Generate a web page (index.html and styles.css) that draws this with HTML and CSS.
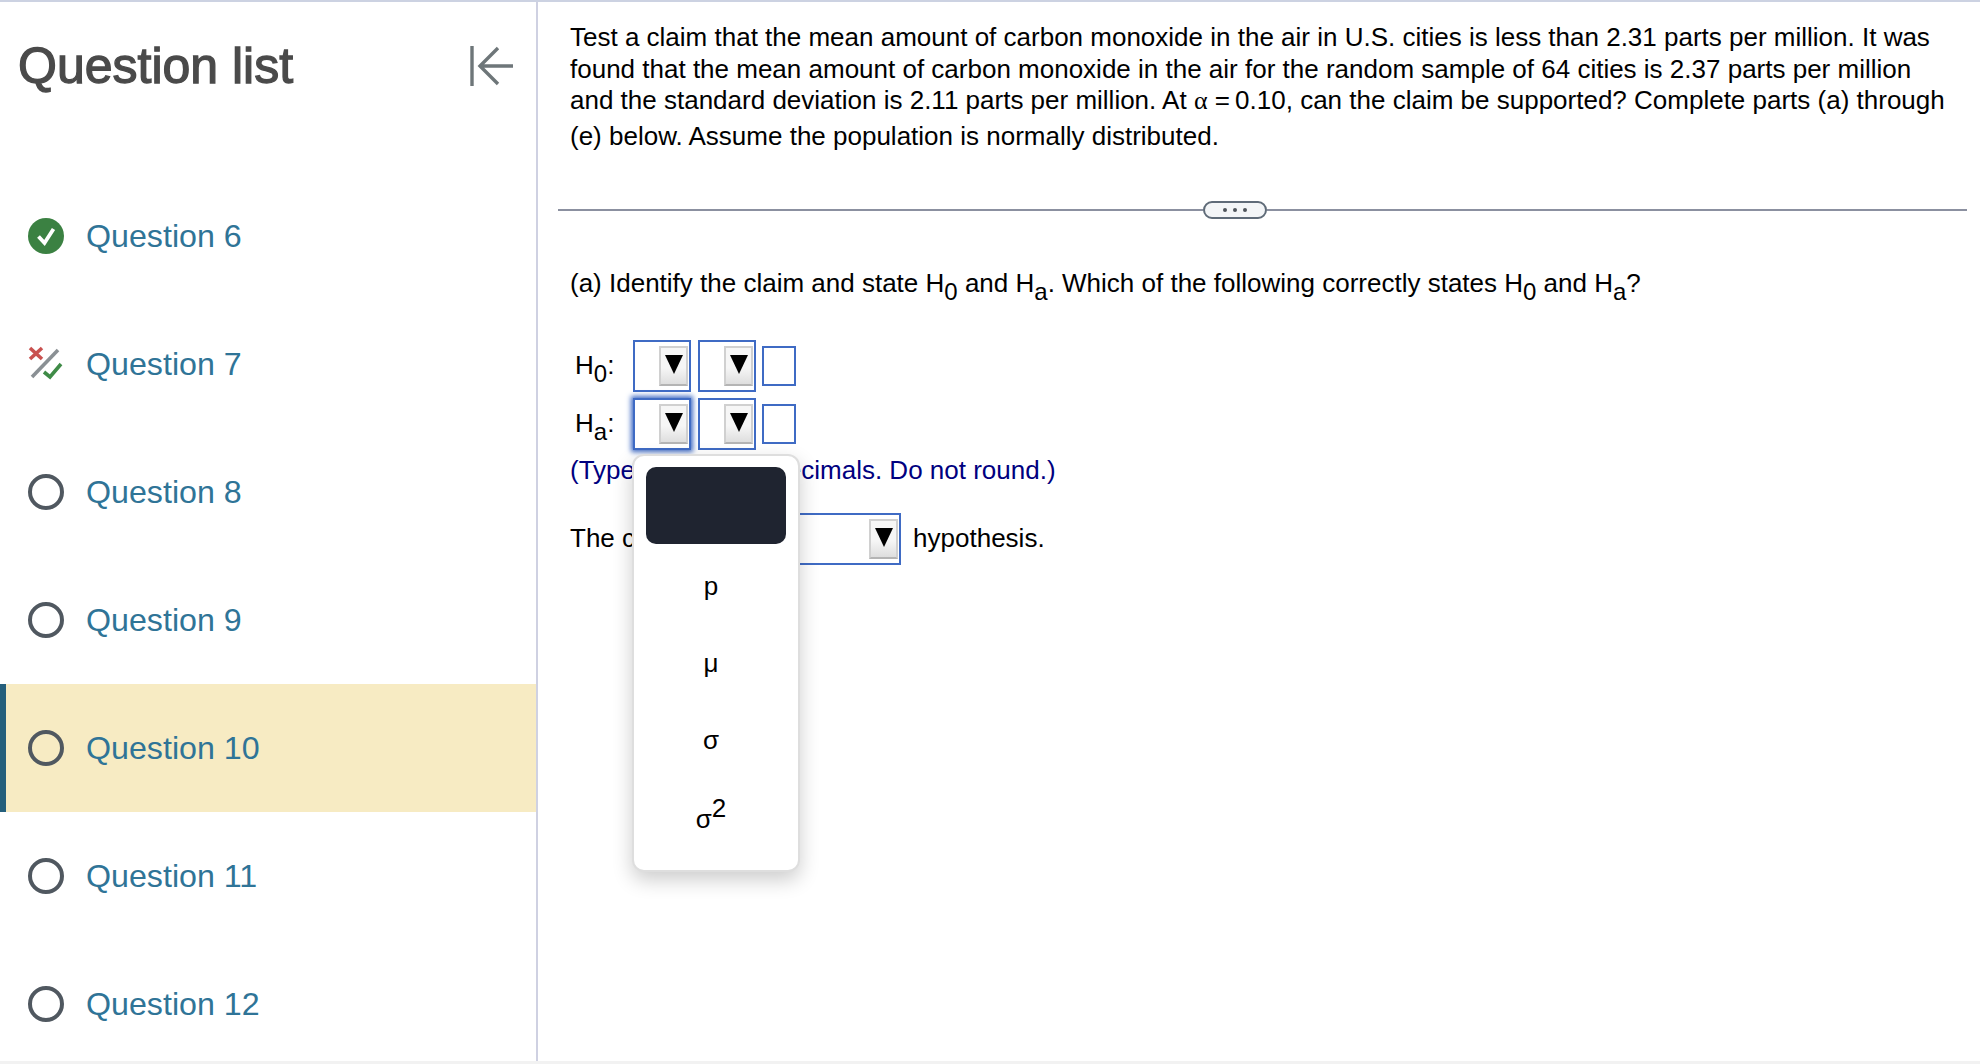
FILE: index.html
```html
<!DOCTYPE html>
<html lang="en">
<head>
<meta charset="utf-8">
<title>Question list</title>
<link rel="stylesheet" href="styles.css">
</head>
<body>
<div class="app">
  <aside class="sidebar">
    <header class="side-head">
      <h1 class="side-title">Question list</h1>
      <svg class="collapse" viewBox="0 0 44 42" width="44" height="42" aria-hidden="true">
        <path d="M2 1V41" />
        <path d="M43 21H10M28 3L10 21L28 39" />
      </svg>
    </header>
    <ul class="q-list">
      <li class="q-row">
        <svg class="q-icon" viewBox="0 0 36 36"><circle cx="18" cy="18" r="18" fill="#3b8142"/><path d="M10.5 18.5L16.5 25L25.5 11" fill="none" stroke="#fff" stroke-width="3.8"/></svg>
        <span class="q-label">Question 6</span>
      </li>
      <li class="q-row">
        <svg class="q-icon" viewBox="0 0 36 36"><path d="M2 2L14 13M14 2L2 13" stroke="#c9514f" stroke-width="3.6" fill="none"/><path d="M4 31L30 4" stroke="#8a9094" stroke-width="3.6" fill="none"/><path d="M16 26L22 31L33 18" stroke="#3f8b47" stroke-width="3.6" fill="none"/></svg>
        <span class="q-label">Question 7</span>
      </li>
      <li class="q-row"><span class="q-ring"></span><span class="q-label">Question 8</span></li>
      <li class="q-row"><span class="q-ring"></span><span class="q-label">Question 9</span></li>
      <li class="q-row q-current"><span class="q-ring"></span><span class="q-label">Question 10</span></li>
      <li class="q-row"><span class="q-ring"></span><span class="q-label">Question 11</span></li>
      <li class="q-row"><span class="q-ring"></span><span class="q-label">Question 12</span></li>
    </ul>
  </aside>
  <main class="main">
    <p class="stem">Test a claim that the mean amount of carbon monoxide in the air in U.S. cities is less than 2.31 parts per million. It was found that the mean amount of carbon monoxide in the air for the random sample of 64 cities is 2.37 parts per million and the standard deviation is 2.11 parts per million. At <span class="alpha">α</span>&#8201;=&#8201;0.10, can the claim be supported? Complete parts (a) through (e) below. Assume the population is normally distributed.</p>
    <div class="split">
      <span class="split-line split-left"></span>
      <span class="pill"><i></i><i></i><i></i></span>
      <span class="split-line split-right"></span>
    </div>
    <div class="work">
      <p class="part">(a) Identify the claim and state H<sub>0</sub> and H<sub>a</sub>. Which of the following correctly states H<sub>0</sub> and H<sub>a</sub>?</p>
      <div class="hyp">
        <span class="hyp-label">H<sub>0</sub>:</span>
        <span class="drop"><span class="drop-btn"></span></span>
        <span class="drop"><span class="drop-btn"></span></span>
        <span class="entry"></span>
      </div>
      <div class="hyp hyp-second">
        <span class="hyp-label">H<sub>a</sub>:</span>
        <span class="drop drop-focus"><span class="drop-btn"></span></span>
        <span class="drop"><span class="drop-btn"></span></span>
        <span class="entry"></span>
      </div>
      <p class="hint">(Type integers or decimals. Do not round.)</p>
      <div class="concl">
        <span>The claim is the</span>
        <span class="drop drop-wide"><span class="drop-btn"></span></span>
        <span>hypothesis.</span>
      </div>
      <div class="popup">
        <div class="popup-top"></div>
        <div class="popup-item"><span>p</span></div>
        <div class="popup-item"><span>μ</span></div>
        <div class="popup-item"><span>σ</span></div>
        <div class="popup-item popup-last"><span>σ<sup>2</sup></span></div>
      </div>
    </div>
  </main>
</div>
</body>
</html>
```
FILE: styles.css
```css
* { box-sizing: border-box; }
html, body { margin: 0; padding: 0; height: 1064px; overflow: hidden; background: #f2f2f2; }
body { font-family: "Liberation Sans", Arial, sans-serif; color: #000; }
.app { display: flex; height: 1061px; background: #fff; border-top: 2px solid #ccd2e2; overflow: hidden; }

.sidebar { width: 538px; flex: none; border-right: 2px solid #cfd1e2; overflow: hidden; }
.side-head { height: 170px; display: flex; align-items: flex-start; justify-content: space-between; padding: 0 22px 0 18px; }
.side-title { margin: 36px 0 0; font-size: 50px; line-height: 57px; font-weight: 400; color: #4a4a4a; -webkit-text-stroke: 1.3px #4a4a4a; }
.collapse { margin-top: 43px; fill: none; stroke: #6e7679; stroke-width: 3.4; }

.q-list { list-style: none; margin: 0; padding: 0; }
.q-row { height: 128px; display: flex; align-items: center; gap: 22px; padding-left: 28px; }
.q-current { background: #f7ebc3; box-shadow: inset 6px 0 0 #255f7c; }
.q-icon { width: 36px; height: 36px; flex: none; }
.q-ring { width: 36px; height: 36px; flex: none; border: 4px solid #505860; border-radius: 50%; }
.q-label { font-size: 32.2px; color: #2f7497; line-height: 40px; }

.main { flex: 1; padding: 20px 13px 0 20px; font-size: 26px; line-height: 31.6px; }
.stem { margin: 0; padding: 0 12px 0 12px; }
.alpha { display: inline-block; padding-bottom: 4px; margin-right: 2px; font-family: "Liberation Serif", serif; line-height: 31.6px; }

.split { display: flex; align-items: center; margin-top: 49px; height: 17px; }
.split-line { height: 2px; background: #8b90a0; }
.split-left { width: 645px; flex: none; }
.split-right { flex: 1; }
.pill { width: 64px; height: 18px; flex: none; border: 2px solid #5f6b78; border-radius: 9px; background: #f3f5f7; display: flex; align-items: center; justify-content: center; gap: 6px; }
.pill i { width: 4px; height: 4px; border-radius: 50%; background: #50555c; }

.work { position: relative; padding: 50px 0 0 12px; }
.part, .hint { margin: 0; }
sub { font-size: 24px; line-height: 0; vertical-align: -8px; }
sup { font-size: 26px; line-height: 0; vertical-align: baseline; position: relative; top: -11px; }

.hyp { display: flex; align-items: center; height: 52px; margin-top: 40px; }
.hyp-second { margin-top: 6px; }
.hyp-label { width: 63px; padding-left: 5px; flex: none; }
.drop { width: 58px; height: 52px; margin-right: 7px; flex: none; border: 2.5px solid #3f6bc4; display: flex; justify-content: flex-end; align-items: center; padding-right: 1px; background: #fff; }
.drop-focus { box-shadow: 0 0 5px 2px #3f6bc4; }
.drop-wide { width: 146px; margin: 0 12px 0 3px; }
.drop-btn { width: 29px; height: 40px; border: 2px solid #d0d0d0; border-bottom-color: #b4b4b4; background: linear-gradient(#f6f6f6 55%, #dedede); display: flex; justify-content: center; padding-top: 7px; }
.drop-btn::before { content: ""; width: 0; height: 0; border-left: 9.5px solid transparent; border-right: 9.5px solid transparent; border-top: 19px solid #000; }
.entry { width: 34px; height: 40px; border: 2.5px solid #3f6bc4; margin-left: -1px; }

.hint { color: #00007f; margin-top: 5px; }
.concl { display: flex; align-items: center; margin-top: 26px; height: 52px; }

.popup { position: absolute; left: 74px; top: 236px; width: 168px; height: 418px; background: #fff; border: 2px solid #dedede; border-radius: 12px; box-shadow: 0 8px 20px rgba(0, 0, 0, 0.2); padding: 11px 12px 0; }
.popup-top { height: 77px; background: #1f2430; border-radius: 10px; margin-bottom: 3.5px; }
.popup-item { height: 77px; display: flex; align-items: center; justify-content: center; padding-right: 10px; }
.popup-last { padding-top: 5px; }
```
